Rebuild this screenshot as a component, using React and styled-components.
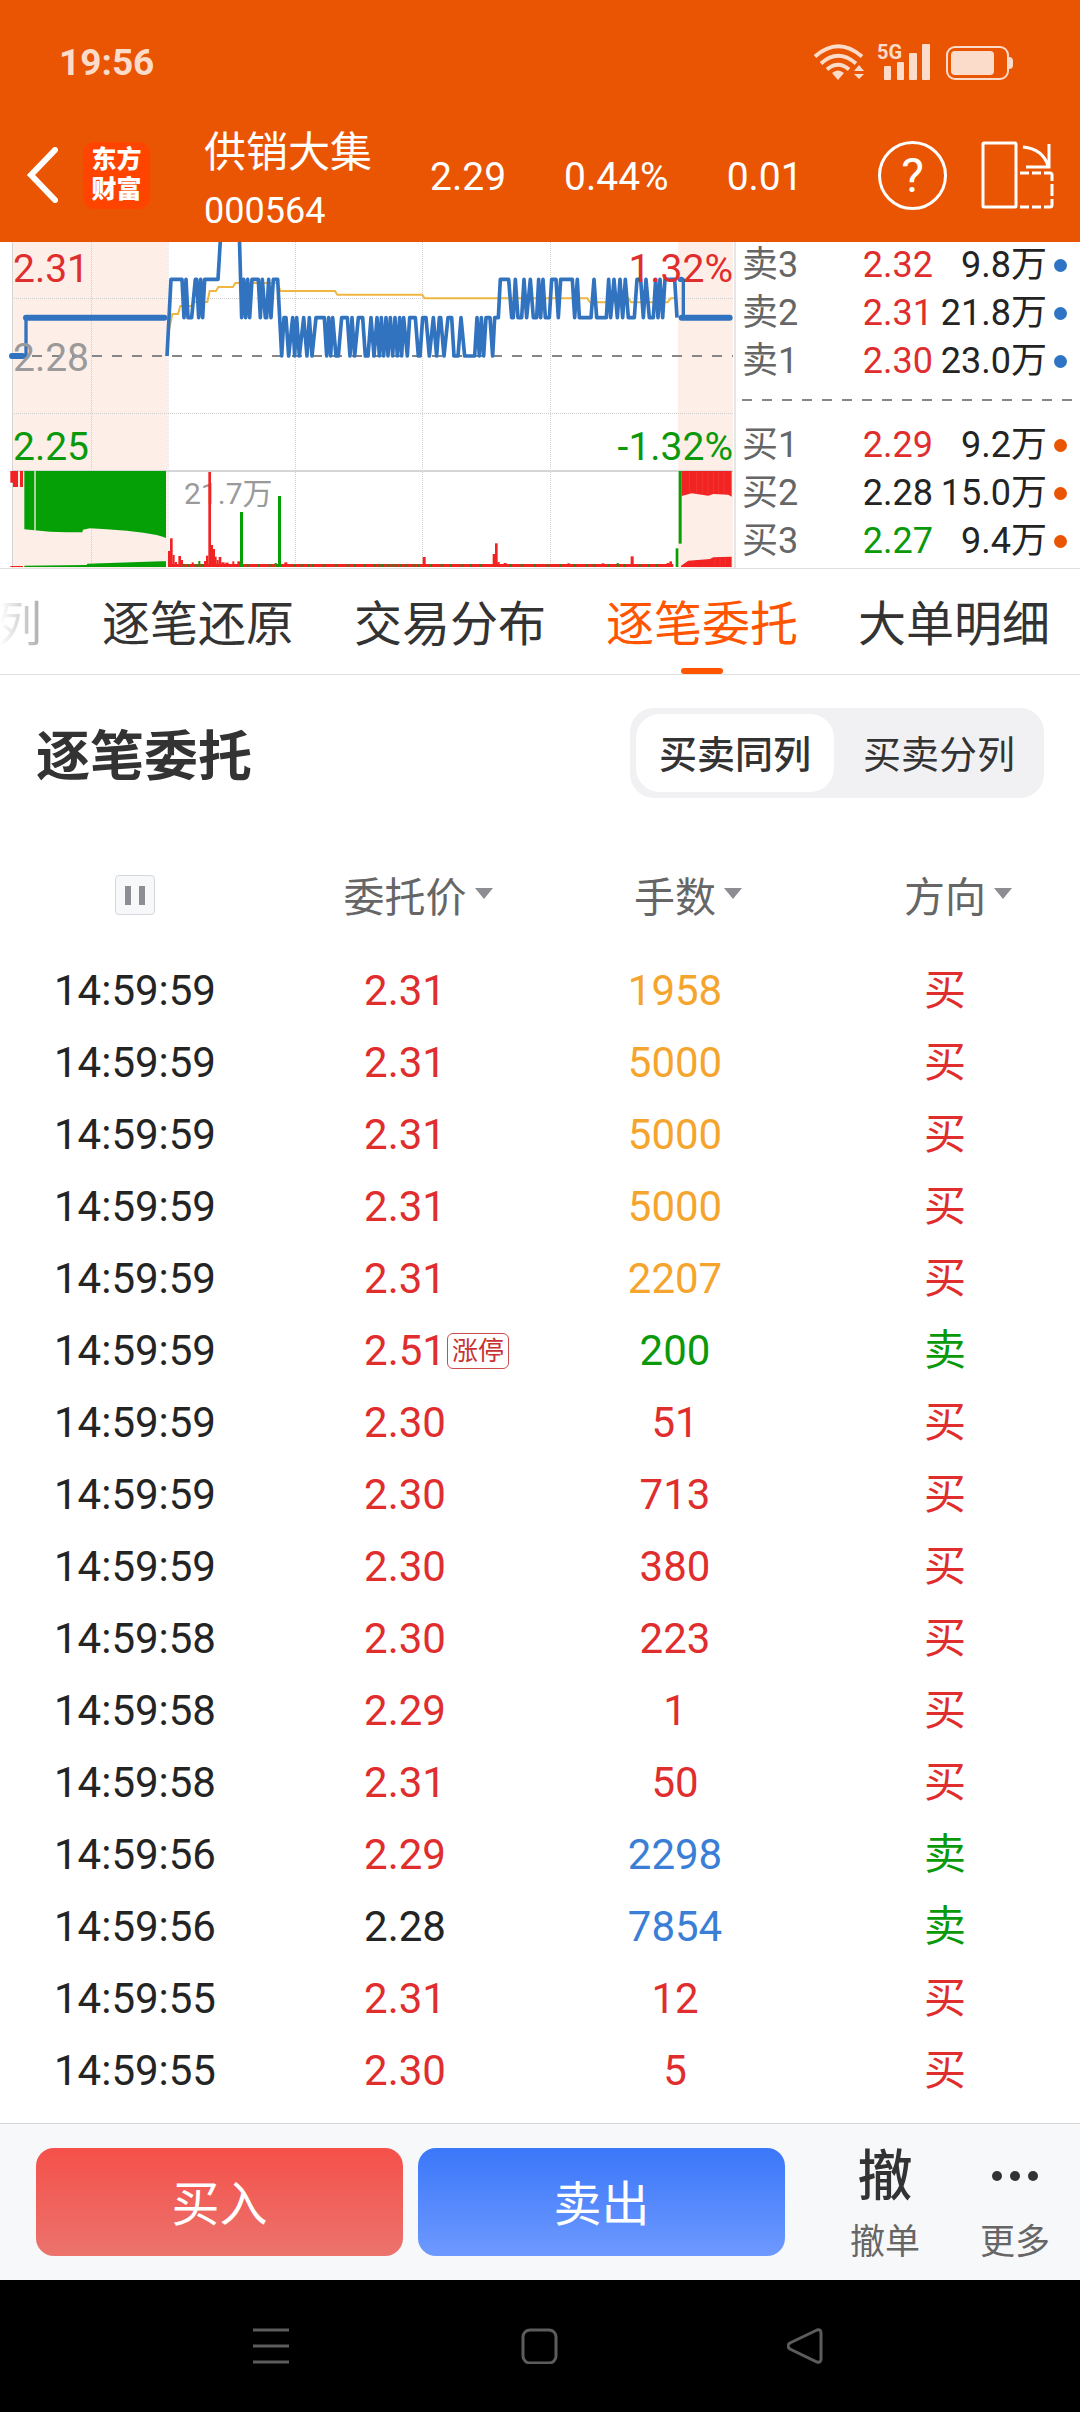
import React, { useState } from "react";
import styled, { createGlobalStyle } from "styled-components";

const colors = {
  red: "#e02d2d",
  green: "#0a990a",
  orange: "#f5a52d",
  blue: "#3a7fd5",
  black: "#242424",
};

const sells = [
  { name: "卖3", price: "2.32", tone: "red", amount: "9.8万" },
  { name: "卖2", price: "2.31", tone: "red", amount: "21.8万" },
  { name: "卖1", price: "2.30", tone: "red", amount: "23.0万" },
];

const buys = [
  { name: "买1", price: "2.29", tone: "red", amount: "9.2万" },
  { name: "买2", price: "2.28", tone: "black", amount: "15.0万" },
  { name: "买3", price: "2.27", tone: "green", amount: "9.4万" },
];

const tabs = ["列", "逐笔还原", "交易分布", "逐笔委托", "大单明细"];

// time, price, price tone, lots, lots tone, side, tag
const orders = [
  ["14:59:59", "2.31", "red", "1958", "orange", "买"],
  ["14:59:59", "2.31", "red", "5000", "orange", "买"],
  ["14:59:59", "2.31", "red", "5000", "orange", "买"],
  ["14:59:59", "2.31", "red", "5000", "orange", "买"],
  ["14:59:59", "2.31", "red", "2207", "orange", "买"],
  ["14:59:59", "2.51", "red", "200", "green", "卖", "涨停"],
  ["14:59:59", "2.30", "red", "51", "red", "买"],
  ["14:59:59", "2.30", "red", "713", "red", "买"],
  ["14:59:59", "2.30", "red", "380", "red", "买"],
  ["14:59:58", "2.30", "red", "223", "red", "买"],
  ["14:59:58", "2.29", "red", "1", "red", "买"],
  ["14:59:58", "2.31", "red", "50", "red", "买"],
  ["14:59:56", "2.29", "red", "2298", "blue", "卖"],
  ["14:59:56", "2.28", "black", "7854", "blue", "卖"],
  ["14:59:55", "2.31", "red", "12", "red", "买"],
  ["14:59:55", "2.30", "red", "5", "red", "买"],
];

// chart data, in thirds of a pixel: h = 2.30, m = 2.29, l = 2.28, t = above the top edge
const levels = { t: 0, h: 133, m: 248, l: 363 };
const priceTicks =
  "501l 513h 546h 552m 558h 564m 575m 586h 590h 596m 602h 608m 614h 654h 662t 718t 725m 731h 737m 743h 749m 756h 775h 781m 787h 796m 800m 806h 813m 820h 833h 845l 852m 858m 866l 878m 884l 890m 898l 911m 921l 928m 936l 948m 973m 980l 986m 992l 998m 1008l 1015l 1025m 1042m 1050l 1056m 1064l 1075m 1088m 1096l 1104l 1113m 1122l 1131m 1138l 1144m 1151l 1158m 1164l 1171m 1178l 1185m 1192l 1199m 1205l 1211m 1222l 1229m 1246m 1255l 1260l 1268m 1278m 1288l 1300m 1310l 1318m 1322m 1332l 1344m 1355m 1362l 1374l 1383m 1394l 1424l 1431m 1438l 1444m 1451l 1458m 1470m 1478l 1484m 1495m 1501h 1526h 1535m 1540m 1546h 1554m 1565m 1572h 1580m 1591h 1600m 1610m 1616h 1622m 1629h 1636m 1648m 1655h 1668h 1675m 1682h 1717h 1724m 1732h 1738m 1773m 1782h 1790m 1819m 1826h 1832m 1842h 1852m 1860h 1868m 1876h 1885m 1903m 1911h 1922h 1930m 1938h 1948m 1960m 1967h 1974m 1980h 1988m 1995h 2024h 2031m";
const pricePath = priceTicks
  .split(" ")
  .map((tick) => `${parseInt(tick)},${levels[tick.slice(-1)]}`)
  .join(" ");

// x, width, top, base line is 996
const redBars = [
  [504, 6, 948], [510, 8, 910], [518, 6, 960], [524, 7, 981], [535, 8, 963],
  [543, 6, 975], [575, 6, 982], [612, 6, 978], [618, 7, 962], [625, 8, 711],
  [633, 6, 930], [639, 6, 942], [645, 5, 965], [650, 6, 975], [656, 8, 966],
  [664, 10, 982], [676, 10, 983], [697, 6, 979], [712, 8, 979], [853, 9, 982],
  [1268, 9, 966], [1478, 7, 957], [1485, 8, 925], [1493, 6, 981], [1511, 9, 984],
  [1702, 8, 985], [1805, 8, 985], [1892, 9, 964], [2000, 8, 984], [2008, 8, 979],
];
const greenBars = [
  [595, 6, 978], [720, 9, 831], [834, 9, 783], [824, 6, 984], [1850, 6, 984],
  [2027, 8, 940],
];
const greenFlecks = [
  548, 562, 584, 604, 740, 772, 806, 880, 902, 921, 936, 968, 1004, 1040,
  1062, 1092, 1120, 1136, 1146, 1160, 1172, 1184, 1200, 1214, 1238, 1254,
  1290, 1322, 1350, 1382, 1410, 1440, 1530, 1562, 1600, 1640, 1680, 1720,
  1756, 1778, 1822, 1870, 1916, 1944, 1968,
];

const Chart = () => (
  <ChartSvg viewBox="0 0 736 326" role="img" aria-label="分时图">
    <rect x="12" y="0" width="155" height="326" fill="#fdeee8" />
    <rect x="678" y="0" width="55" height="326" fill="#fdeee8" />
    <g stroke="#cfcfcf" strokeWidth="1" strokeDasharray="1 1">
      <path d="M12 56.5H733M12 171.5H733" />
      <path d="M91.5 0V326M168 0V326M295.5 0V326M422.5 0V326M550.5 0V326" />
    </g>
    <path d="M12.5 0V326" stroke="#d5d5d5" strokeWidth="1" />
    <path d="M12 229H733" stroke="#d5d5d5" strokeWidth="2" />
    <path d="M12 114H733" stroke="#868686" strokeWidth="2" strokeDasharray="10 10" />
    <ChartText x="184" y="262" $small fill="#9a9a9a">21.7万</ChartText>

    <g transform="scale(0.33333) translate(0 -21)" fill="none">
      <polyline
        points="507,285 517,237 534,237 541,213 575,213 583,201 622,201 629,168 648,168 655,156 699,156 706,144 833,144 841,168 1005,168 1012,179 1267,179 1273,190 1762,190 1770,202 1880,202 1885,190 1893,202 2003,202 2012,190 2026,190"
        stroke="#efb642"
        strokeWidth="6"
      />
      <polyline points={pricePath} stroke="#3273c0" strokeWidth="11" strokeLinejoin="round" />
      <g stroke="#3273c0" strokeLinecap="round">
        <path d="M36 363H68M78 248H493M2045 248H2189" strokeWidth="18" />
        <path d="M78 363V248M2050 133V248" strokeWidth="10" />
        <path d="M2041 133H2044" strokeWidth="16" />
      </g>

      <g fill="#f12323">
        <path d="M31 708H54V756H39V743H31ZM60 708H69V756H60ZM31 993H69V996H31Z" />
        <path d="M504 987H2020V996H504Z" />
        {redBars.map(([x, w, top]) => (
          <rect key={x} x={x} y={top} width={w} height={996 - top} />
        ))}
        <path d="M2045 708H2195V785L2185 779L2140 777L2125 782L2110 780L2075 775L2045 783Z" />
        <path d="M2043 992L2065 977L2130 972L2140 967L2195 965V996H2043Z" />
      </g>
      <g fill="#05a005">
        <path d="M73 708H498V909L488 905L470 900L430 893L380 887L320 883L270 880L249 884L247 892L200 892L150 890L73 883Z" />
        <path d="M73 992L260 990L262 986L485 979H498V996H73Z" />
        <path d="M2036 708H2045V926H2036Z" />
        {greenBars.map(([x, w, top]) => (
          <rect key={x} x={x} y={top} width={w} height={996 - top} />
        ))}
      </g>
      <g fill="#3c7c14">
        {greenFlecks.map((x) => (
          <rect key={x} x={x} y="987" width="6" height="9" />
        ))}
      </g>
      <path d="M105 708V887" stroke="#fdeee8" strokeWidth="4" />
      <path
        d="M2068 710V776M2090 710V776M2108 710V778M2124 710V778M2140 710V776M2156 710V776M2172 710V776M2145 970V994M2160 970V994M2176 970V994"
        stroke="#f4403c"
        strokeWidth="2"
      />
    </g>

    <ChartText x="13" y="40" fill={colors.red}>2.31</ChartText>
    <ChartText x="13" y="129" fill="#9a9a9a">2.28</ChartText>
    <ChartText x="13" y="218" fill={colors.green}>2.25</ChartText>
    <ChartText x="733" y="40" textAnchor="end" fill={colors.red}>1.32%</ChartText>
    <ChartText x="733" y="218" textAnchor="end" fill={colors.green}>-1.32%</ChartText>
    <path d="M735 0V326" stroke="#cccccc" strokeWidth="1" />
  </ChartSvg>
);

const StatusIcons = () => (
  <svg width="200" height="56" viewBox="814 34 200 56" fill="#fbdccb" aria-hidden="true">
    <g fill="none" stroke="#fbdccb" strokeWidth="4">
      <path d="M815 56.500Q838 36 862 56.500" />
      <path d="M821 63.500Q838 48 856 63.500" />
      <path d="M827 69.500Q838 60 849 69.500" />
    </g>
    <path d="M832 73Q838 68 844 73L838 80ZM854 71L859 65L864 71ZM854 74L859 79L864 74Z" />
    <StatusText x="877" y="59">5G</StatusText>
    <rect x="884" y="66" width="7" height="14" rx="1" />
    <rect x="897" y="62" width="7" height="18" rx="1" />
    <rect x="909" y="53" width="8" height="27" rx="1" />
    <rect x="922" y="44" width="8" height="36" rx="1" />
    <rect x="947" y="47" width="61" height="32" rx="8" fill="none" stroke="#fbdccb" strokeWidth="2" />
    <rect x="951" y="51" width="43" height="24" rx="4" />
    <path d="M1009 57Q1013 57 1013 61V65Q1013 69 1009 69Z" />
  </svg>
);

const OrderBook = ({ rows, side }) => (
  <BookList>
    {rows.map((row) => (
      <BookRow key={row.name}>
        <BookName>{row.name}</BookName>
        <BookPrice $tone={row.tone}>{row.price}</BookPrice>
        <BookAmount>{row.amount}</BookAmount>
        <Dot $side={side} />
      </BookRow>
    ))}
  </BookList>
);

const App = () => {
  const [tab, setTab] = useState("逐笔委托");
  const [mode, setMode] = useState("买卖同列");

  return (
    <Page>
      <GlobalStyle />
      <Top>
        <StatusBar>
          <Clock>19:56</Clock>
          <StatusIcons />
        </StatusBar>
        <TitleBar>
          <IconButton aria-label="返回">
            <svg width="32" height="56" viewBox="0 0 32 56" fill="none" stroke="#fff" strokeWidth="6">
              <path d="M29 3L5 28L29 53" strokeLinecap="round" />
            </svg>
          </IconButton>
          <Logo>
            <span>东方</span>
            <span>财富</span>
          </Logo>
          <Stock>
            <StockName>供销大集</StockName>
            <StockCode>000564</StockCode>
          </Stock>
          <Quote>
            <span>2.29</span>
            <span>0.44%</span>
            <span>0.01</span>
          </Quote>
          <Tools>
            <HelpButton aria-label="帮助">?</HelpButton>
            <IconButton aria-label="横屏">
              <svg width="73" height="68" viewBox="0 0 73 68" fill="none" stroke="#fff" strokeWidth="3">
                <rect x="2" y="2" width="33" height="64" rx="1" />
                <path d="M42 6Q62 8 67 25M68 3V26H45" />
                <path d="M39 32H48M51 32H60M63 32H69Q71 32 71 34V40M71 43V55M71 58V64Q71 66 69 66H63M60 66H51M48 66H39" />
              </svg>
            </IconButton>
          </Tools>
        </TitleBar>
      </Top>

      <Market>
        <Chart />
        <Book>
          <OrderBook rows={sells} side="sell" />
          <BookDivider />
          <OrderBook rows={buys} side="buy" />
        </Book>
      </Market>

      <Tabs>
        {tabs.map((name) => (
          <Tab key={name} $active={name === tab} onClick={() => setTab(name)}>
            {name}
          </Tab>
        ))}
      </Tabs>

      <Section>
        <SectionTitle>逐笔委托</SectionTitle>
        <Switcher>
          {["买卖同列", "买卖分列"].map((name) => (
            <Option key={name} $active={name === mode} onClick={() => setMode(name)}>
              {name}
            </Option>
          ))}
        </Switcher>
      </Section>

      <Table>
        <thead>
          <tr>
            <HeadCell>
              <PauseButton aria-label="暂停">
                <i />
                <i />
              </PauseButton>
            </HeadCell>
            {["委托价", "手数", "方向"].map((name) => (
              <HeadCell key={name}>
                <SortButton>
                  {name}
                  <Caret />
                </SortButton>
              </HeadCell>
            ))}
          </tr>
        </thead>
        <tbody>
          {orders.map(([time, price, tone, lots, lotsTone, side, tag], index) => (
            <tr key={index}>
              <Cell $tone="black">{time}</Cell>
              <Cell $tone={tone}>
                <PriceBox>
                  {price}
                  {tag && <Tag>{tag}</Tag>}
                </PriceBox>
              </Cell>
              <Cell $tone={lotsTone}>{lots}</Cell>
              <Cell $tone={side === "买" ? "red" : "green"}>{side}</Cell>
            </tr>
          ))}
        </tbody>
      </Table>

      <Footer>
        <TradeButton $side="buy">买入</TradeButton>
        <TradeButton $side="sell">卖出</TradeButton>
        <Actions>
          <Action>
            <ActionIcon>撤</ActionIcon>
            撤单
          </Action>
          <Action>
            <ActionIcon>
              <svg width="48" height="10" viewBox="0 0 48 10" fill="#333">
                <circle cx="6" cy="5" r="5" />
                <circle cx="24" cy="5" r="5" />
                <circle cx="42" cy="5" r="5" />
              </svg>
            </ActionIcon>
            更多
          </Action>
        </Actions>
      </Footer>

      <NavBar>
        <IconButton aria-label="菜单">
          <svg width="44" height="36" viewBox="0 0 44 36" stroke="#5c5c5c" strokeWidth="3">
            <path d="M4 2H40M4 18H40M4 34H40" />
          </svg>
        </IconButton>
        <IconButton aria-label="主页">
          <svg width="44" height="36" viewBox="0 0 44 36" fill="none" stroke="#5c5c5c" strokeWidth="3">
            <rect x="5" y="2" width="33" height="33" rx="7" />
          </svg>
        </IconButton>
        <IconButton aria-label="后退">
          <svg width="44" height="36" viewBox="0 0 44 36" fill="none" stroke="#5c5c5c" strokeWidth="3">
            <path d="M30 2L3 15Q-1 18 3 21L30 34Q34 35 34 31V5Q34 1 30 2Z" />
          </svg>
        </IconButton>
      </NavBar>
    </Page>
  );
};

const GlobalStyle = createGlobalStyle`
  * {
    box-sizing: border-box;
  }
  body {
    margin: 0;
    background: #fff;
    font-family: Roboto, "Noto Sans CJK SC", sans-serif;
  }
  button {
    margin: 0;
    padding: 0;
    border: none;
    background: none;
    color: inherit;
    font: inherit;
    cursor: pointer;
  }
  svg {
    display: block;
  }
`;

const Page = styled.div`
  display: flex;
  flex-direction: column;
  min-height: 100vh;
  overflow: hidden;
`;

const Top = styled.header`
  background-color: #ea5504;
  color: #fff;
`;

const StatusBar = styled.div`
  display: flex;
  justify-content: space-between;
  align-items: center;
  height: 108px;
  padding: 16px 66px 0 59px;
`;

const Clock = styled.span`
  color: #fbdccb;
  font-size: 37px;
  font-weight: 700;
`;

const StatusText = styled.text`
  font-size: 20px;
  font-weight: 700;
`;

const TitleBar = styled.div`
  display: flex;
  align-items: center;
  height: 134px;
  padding: 0 26px;
`;

const IconButton = styled.button`
  display: flex;
  justify-content: center;
  align-items: center;
`;

const Logo = styled.div`
  display: flex;
  flex-direction: column;
  justify-content: center;
  align-items: center;
  width: 67px;
  height: 67px;
  margin: 0 54px 0 25px;
  border-radius: 12px;
  background-color: #ff4400;
  font-size: 25px;
  font-weight: 900;
  line-height: 30px;
`;

const Stock = styled.div`
  display: flex;
  flex-direction: column;
  padding-top: 14px;
  line-height: 58px;
`;

const StockName = styled.span`
  font-size: 42px;
`;

const StockCode = styled.span`
  font-size: 36px;
`;

const Quote = styled.div`
  display: flex;
  gap: 58px;
  margin-left: 58px;
  padding-top: 3px;
  font-size: 39px;
`;

const Tools = styled.div`
  display: flex;
  align-items: center;
  gap: 34px;
  margin-left: auto;
`;

const HelpButton = styled.button`
  width: 69px;
  height: 69px;
  border: 3px solid #fff;
  border-radius: 50%;
  font-size: 48px;
  line-height: 63px;
`;

const Market = styled.section`
  display: grid;
  grid-template-columns: 736fr 344fr;
  border-bottom: 1px solid #dedede;
`;

const ChartSvg = styled.svg`
  width: 100%;
  height: auto;
`;

const ChartText = styled.text`
  font-size: ${(props) => (props.$small ? 30 : 39)}px;
`;

const Book = styled.div`
  padding: 1px 8px 0 6px;
`;

const BookList = styled.div`
  display: grid;
  gap: 4px;
`;

const BookRow = styled.div`
  display: grid;
  grid-template-columns: 1fr auto 114px 20px;
  align-items: center;
  padding-right: 5px;
  font-size: 36px;
  line-height: 44px;
`;

const BookName = styled.span`
  color: #666;
`;

const BookPrice = styled.span`
  color: ${(props) => colors[props.$tone]};
`;

const BookAmount = styled.span`
  color: ${colors.black};
  text-align: right;
`;

const Dot = styled.i`
  justify-self: end;
  width: 13px;
  height: 13px;
  border-radius: 50%;
  background-color: ${(props) => (props.$side === "sell" ? "#2f74c4" : "#ea5504")};
`;

const BookDivider = styled.div`
  height: 2px;
  margin: 16px 0 22px;
  background: repeating-linear-gradient(90deg, #868686 0 10px, transparent 10px 20px);
`;

const Tabs = styled.nav`
  display: flex;
  justify-content: flex-end;
  gap: 60px;
  height: 106px;
  padding-right: 30px;
  border-bottom: 1px solid #e2e2e2;
`;

const Tab = styled.button`
  position: relative;
  flex: none;
  padding-bottom: 3px;
  color: ${(props) => (props.$active ? "#ff5500" : "#333")};
  font-size: 48px;
  white-space: nowrap;

  /* fades out under the left edge */
  &:first-child {
    color: transparent;
    background: linear-gradient(90deg, #fff 6px, #aaa) text;
  }

  &::after {
    content: "";
    display: ${(props) => (props.$active ? "block" : "none")};
    position: absolute;
    bottom: 0;
    left: 50%;
    width: 42px;
    height: 6px;
    margin-left: -21px;
    border-radius: 3px;
    background-color: #ff5500;
  }
`;

const Section = styled.section`
  display: flex;
  justify-content: space-between;
  align-items: center;
  padding: 33px 36px;
`;

const SectionTitle = styled.h2`
  margin: 0;
  padding-top: 10px;
  color: #333;
  font-size: 54px;
  font-weight: 700;
  line-height: 80px;
`;

const Switcher = styled.div`
  display: flex;
  height: 90px;
  padding: 6px 0 6px 6px;
  border-radius: 24px;
  background-color: #f1f1f4;
`;

const Option = styled.button`
  width: ${(props) => (props.$active ? 198 : 210)}px;
  padding-bottom: 3px;
  border-radius: 24px;
  background-color: ${(props) => (props.$active ? "#fff" : "transparent")};
  color: #333;
  font-size: 38px;
  font-weight: ${(props) => (props.$active ? 500 : 400)};
`;

const Table = styled.table`
  width: 100%;
  margin-bottom: 15px;
  border-collapse: collapse;
  table-layout: fixed;
`;

const HeadCell = styled.th`
  height: 124px;
  padding: 4px 0 0;
  color: #666;
  font-size: 41px;
  font-weight: 400;
`;

const SortButton = styled.button`
  display: inline-flex;
  align-items: center;
  padding-bottom: 3px;
`;

const Caret = styled.i`
  margin: 0 -26px 0 8px;
  border: 9px solid transparent;
  border-top: 11px solid #8e8d94;
  border-bottom: none;
`;

const PauseButton = styled.button`
  display: flex;
  justify-content: center;
  align-items: center;
  gap: 8px;
  width: 40px;
  height: 40px;
  margin: 0 auto;
  border: 1px solid #d6d8dd;
  border-radius: 4px;
  background-color: #f7f8fa;

  i {
    width: 6px;
    height: 19px;
    background-color: #8e8d94;
  }
`;

const Cell = styled.td`
  height: 72px;
  padding: 0;
  color: ${(props) => colors[props.$tone]};
  font-size: 42px;
  line-height: 72px;
  text-align: center;
`;

const PriceBox = styled.span`
  display: inline-flex;
  align-items: center;
`;

const Tag = styled.span`
  width: 62px;
  height: 36px;
  margin: 0 -63px 0 1px;
  border: 1px solid #cf4a4a;
  border-radius: 6px;
  color: #c83232;
  font-size: 26px;
  line-height: 34px;
`;

const Footer = styled.footer`
  display: flex;
  gap: 15px;
  margin-top: auto;
  padding: 24px 0 24px 36px;
  border-top: 1px solid #d8d8d8;
  background-color: #f7f8fa;
`;

const TradeButton = styled.button`
  flex: 1;
  height: 108px;
  padding-bottom: 4px;
  border-radius: 18px;
  background: ${(props) =>
    props.$side === "buy"
      ? "linear-gradient(#f5504a, #ec736d)"
      : "linear-gradient(#3a77f9, #6e99ff)"};
  color: #fff;
  font-size: 48px;
`;

const Actions = styled.div`
  display: flex;
  height: 108px;
  margin-left: 20px;
`;

const Action = styled.button`
  display: flex;
  flex-direction: column;
  align-items: center;
  width: 130px;
  color: #666;
  font-size: 35px;
  line-height: 78px;
`;

const ActionIcon = styled.span`
  display: flex;
  flex: none;
  justify-content: center;
  align-items: center;
  height: 56px;
  color: #333;
  font-size: 55px;
  font-weight: 500;
`;

const NavBar = styled.nav`
  display: grid;
  grid-template-columns: repeat(3, 1fr);
  justify-items: center;
  height: 132px;
  padding: 0 136px;
  background-color: #000;
`;

export default App;
